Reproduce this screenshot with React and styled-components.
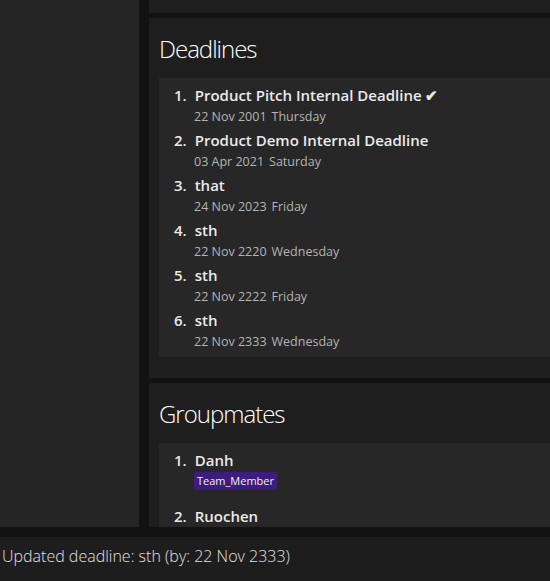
import styled, { createGlobalStyle } from "styled-components";

const GlobalStyle = createGlobalStyle`
  html, body {
    margin: 0;
    padding: 0;
    background: #121212;
    overflow: hidden;
  }
  * {
    box-sizing: border-box;
  }
`;

const deadlines = [
  { name: "Product Pitch Internal Deadline ✔", date: "22 Nov 2001", day: "Thursday" },
  { name: "Product Demo Internal Deadline", date: "03 Apr 2021", day: "Saturday" },
  { name: "that", date: "24 Nov 2023", day: "Friday" },
  { name: "sth", date: "22 Nov 2220", day: "Wednesday" },
  { name: "sth", date: "22 Nov 2222", day: "Friday" },
  { name: "sth", date: "22 Nov 2333", day: "Wednesday" },
];

const groupmates = [
  { name: "Danh", roles: ["Team_Member"] },
  { name: "Ruochen", roles: [] },
];

export default function App() {
  return (
    <>
      <GlobalStyle />
      <Window>
        <Main>
          <SidePanel />
          <RightColumn>
            <TopPanel />
            <Panel $height={360}>
              <Heading>Deadlines</Heading>
              <ListBox>
                {deadlines.map((d, i) => (
                  <Item key={i}>
                    <TitleRow>
                      <Index>{i + 1}.</Index>
                      <Name>{d.name}</Name>
                    </TitleRow>
                    <DateRow>
                      <span>{d.date}</span>
                      <span>{d.day}</span>
                    </DateRow>
                  </Item>
                ))}
              </ListBox>
            </Panel>
            <Panel $grow>
              <Heading>Groupmates</Heading>
              <ListBox>
                {groupmates.map((g, i) => (
                  <Item key={i} $tall>
                    <TitleRow>
                      <Index>{i + 1}.</Index>
                      <Name>{g.name}</Name>
                    </TitleRow>
                    <Tags>
                      {g.roles.map((r) => (
                        <Tag key={r}>{r}</Tag>
                      ))}
                    </Tags>
                  </Item>
                ))}
              </ListBox>
            </Panel>
          </RightColumn>
        </Main>
        <StatusBar>Updated deadline: sth (by: 22 Nov 2333)</StatusBar>
      </Window>
    </>
  );
}

const Window = styled.div`
  width: 550px;
  height: 581px;
  display: flex;
  flex-direction: column;
  background: #121212;
  font-family: "Open Sans", "Noto Sans", sans-serif;
  overflow: hidden;
`;

const Main = styled.div`
  height: 537px;
  display: flex;
  gap: 10px;
  padding-bottom: 10px;
  overflow: hidden;
`;

const SidePanel = styled.div`
  width: 139px;
  flex-shrink: 0;
  background: #252525;
`;

const RightColumn = styled.div`
  width: 420px;
  flex-shrink: 0;
  display: flex;
  flex-direction: column;
  gap: 5px;
  overflow: hidden;
`;

const TopPanel = styled.div`
  height: 13px;
  flex-shrink: 0;
  background: #1e1e1e;
`;

const Panel = styled.section`
  background: #1e1e1e;
  padding: 10px 0 21px 10px;
  flex-shrink: 0;
  height: ${({ $height }) => ($height ? `${$height}px` : "auto")};
  flex-grow: ${({ $grow }) => ($grow ? 1 : 0)};
  overflow: hidden;
  display: flex;
  flex-direction: column;
`;

const Heading = styled.h2`
  margin: 0;
  height: 50px;
  padding: 0 0 10px 0;
  display: flex;
  align-items: center;
  font-size: 24px;
  font-weight: 300;
  color: #ffffff;
  letter-spacing: -1px;
`;

const ListBox = styled.div`
  background: #272727;
  padding: 6px 0 0 15px;
  flex: 1;
  overflow: hidden;
  display: flex;
  flex-direction: column;
`;

const Item = styled.div`
  height: ${({ $tall }) => ($tall ? 56 : 45)}px;
  flex-shrink: 0;
  display: flex;
  flex-direction: column;
`;

const TitleRow = styled.div`
  display: flex;
  align-items: center;
  gap: 8px;
  height: 22px;
  color: #eaeaea;
  font-size: 15px;
  font-weight: 600;
  white-space: nowrap;
`;

const Index = styled.span``;

const Name = styled.span``;

const DateRow = styled.div`
  display: flex;
  gap: 5px;
  padding: 1px 0 0 20px;
  height: 19px;
  align-items: center;
  font-size: 12.5px;
  color: #b4b4b4;
  white-space: nowrap;
`;

const Tags = styled.div`
  display: flex;
  gap: 5px;
  padding-left: 20px;
  margin-top: 1px;
`;

const Tag = styled.span`
  background: #3c1c7c;
  color: #f0f0f0;
  font-size: 11px;
  height: 18px;
  line-height: 18px;
  padding: 0 3px;
  border-radius: 2px;
`;

const StatusBar = styled.div`
  height: 44px;
  background: #1d1d1d;
  color: #e0e0e0;
  font-size: 16px;
  font-weight: 300;
  padding: 0 0 6px 2px;
  display: flex;
  align-items: center;
  white-space: nowrap;
`;
